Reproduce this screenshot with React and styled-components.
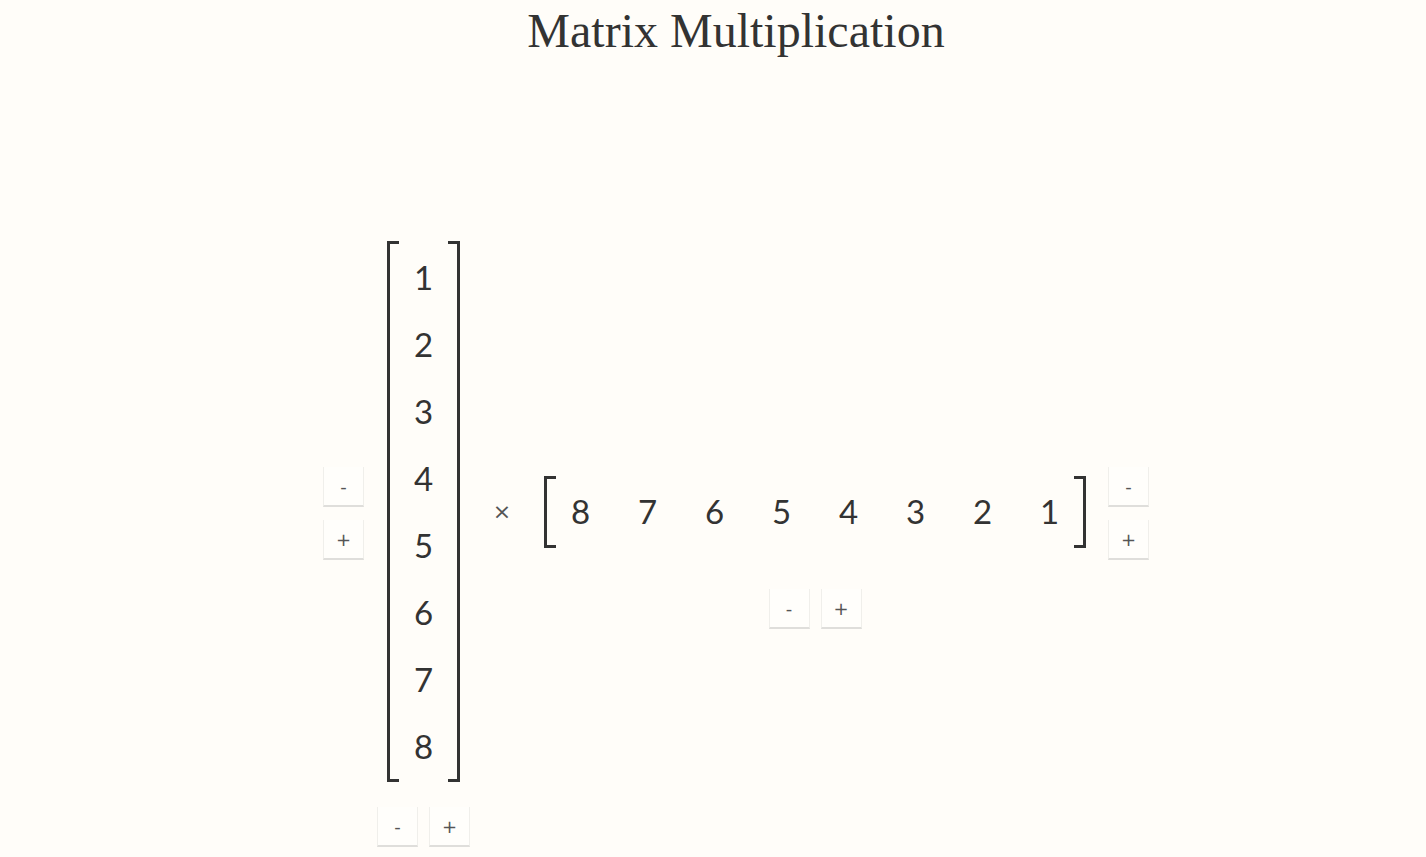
import React from 'react';
import styled, { createGlobalStyle } from 'styled-components';

const GlobalStyle = createGlobalStyle`
    html, body {
        margin: 0;
        padding: 0;
        background: #fffdf9;
        color: #333;
    }
`
const Page = styled.div`
    width: 100%;
    min-height: 100vh;
    padding-left: 46px;
    box-sizing: border-box;
    display: flex;
    flex-direction: column;
    align-items: center;
`
const Title = styled.h1`
    margin: 0;
    font-family: "Liberation Serif", serif;
    font-weight: 400;
    font-size: 48px;
    line-height: 62px;
    color: #333;
`
const Equation = styled.div`
    display: flex;
    align-items: center;
    margin-top: 114px;
`
const Operand = styled.div`
    display: grid;
    grid-template-rows: 1fr auto 1fr;
    column-gap: ${p => p.gap}px;
    align-items: center;
`
const SideControls = styled.div`
    grid-row: 2;
    grid-column: ${p => p.side === 'left' ? 1 : 2};
    display: flex;
    flex-direction: column;
    gap: 13px;
    padding-top: 4px;
`
const BottomControls = styled.div`
    grid-row: 3;
    grid-column: ${p => p.side === 'left' ? 2 : 1};
    align-self: start;
    display: flex;
    justify-content: center;
    gap: 11px;
    margin-top: ${p => p.offset}px;
`
const Matrix = styled.div`
    grid-row: 2;
    grid-column: ${p => p.side === 'left' ? 2 : 1};
    justify-self: center;
    position: relative;
    display: grid;
    grid-template-columns: repeat(${p => p.cols}, 67px);
    grid-auto-rows: 67px;
    padding: 2px 3px 3px;
    &::before, &::after {
        content: '';
        position: absolute;
        top: 0;
        bottom: 0;
        width: 9px;
        border: 3px solid #333;
    }
    &::before {
        left: 0;
        border-right: none;
    }
    &::after {
        right: 0;
        border-left: none;
    }
`
const Cell = styled.div`
    display: flex;
    align-items: center;
    justify-content: center;
    font-family: Lato, "Noto Sans", sans-serif;
    font-size: 33px;
    color: #333;
`
const Times = styled.div`
    width: 64px;
    padding-right: 10px;
    text-align: center;
    font-family: "DejaVu Sans", sans-serif;
    font-size: 22px;
    color: #555;
`
const Button = styled.button`
    width: 41px;
    height: 40px;
    padding: 0;
    background: #fffefb;
    border: 1px solid #f0efeb;
    border-top: none;
    border-bottom: 2px solid #dfdedb;
    font-family: "DejaVu Sans", sans-serif;
    font-size: 18px;
    color: #555;
    cursor: pointer;
`

function Controls({ as: Wrap, side, offset }) {
    return (
        <Wrap side={side} offset={offset}>
            <Button>-</Button>
            <Button>+</Button>
        </Wrap>
    )
}

export default function App() {
    const column = [1, 2, 3, 4, 5, 6, 7, 8];
    const row = [8, 7, 6, 5, 4, 3, 2, 1];
    return (
        <Page>
            <GlobalStyle />
            <Title>Matrix Multiplication</Title>
            <Equation>
                <Operand gap={13}>
                    <Controls as={SideControls} side="left" />
                    <Matrix side="left" cols={1}>
                        {column.map((n, i) => <Cell key={'a' + i}>{n}</Cell>)}
                    </Matrix>
                    <Controls as={BottomControls} side="left" offset={25} />
                </Operand>
                <Times>×</Times>
                <Operand gap={22}>
                    <Matrix side="right" cols={8}>
                        {row.map((n, i) => <Cell key={'b' + i}>{n}</Cell>)}
                    </Matrix>
                    <Controls as={SideControls} side="right" />
                    <Controls as={BottomControls} side="right" offset={29} />
                </Operand>
            </Equation>
        </Page>
    )
}
